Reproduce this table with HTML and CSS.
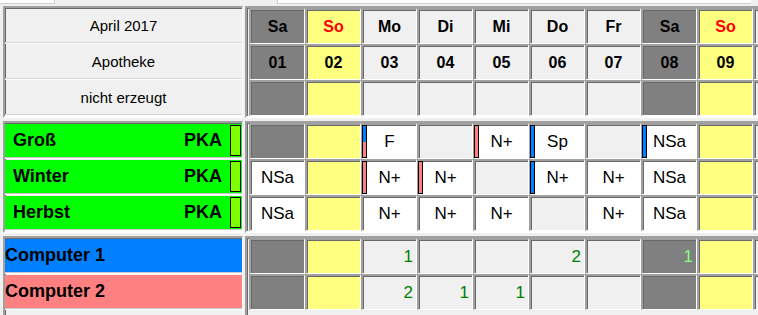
FILE: index.html
```html
<!DOCTYPE html>
<html lang="de">
<head>
<meta charset="utf-8">
<title>Dienstplan April 2017</title>
<link rel="stylesheet" href="styles.css">
</head>
<body>
<div class="topbar"><div class="tb tb1"></div><div class="tb tb2"></div></div>

<section class="band">
  <div class="side">
    <div class="srow">April 2017</div>
    <div class="srow">Apotheke</div>
    <div class="srow">nicht erzeugt</div>
  </div>
  <div class="grid">
    <div class="c we hd">Sa</div><div class="c so hd red">So</div><div class="c lt hd">Mo</div><div class="c lt hd">Di</div><div class="c lt hd">Mi</div><div class="c lt hd">Do</div><div class="c lt hd">Fr</div><div class="c we hd">Sa</div><div class="c so hd red">So</div><div class="c lt"></div>
    <div class="c we hd">01</div><div class="c so hd">02</div><div class="c lt hd">03</div><div class="c lt hd">04</div><div class="c lt hd">05</div><div class="c lt hd">06</div><div class="c lt hd">07</div><div class="c we hd">08</div><div class="c so hd">09</div><div class="c lt"></div>
    <div class="c we"></div><div class="c so"></div><div class="c lt"></div><div class="c lt"></div><div class="c lt"></div><div class="c lt"></div><div class="c lt"></div><div class="c we"></div><div class="c so"></div><div class="c lt"></div>
  </div>
</section>

<section class="band">
  <div class="side">
    <div class="srow"><div class="emp"><span class="ename">Groß</span><span class="equal">PKA</span><span class="tag"></span></div></div>
    <div class="srow"><div class="emp"><span class="ename">Winter</span><span class="equal">PKA</span><span class="tag"></span></div></div>
    <div class="srow"><div class="emp"><span class="ename">Herbst</span><span class="equal">PKA</span><span class="tag"></span></div></div>
  </div>
  <div class="grid">
    <div class="c we"></div><div class="c so"></div><div class="c wh sh"><span class="bar split"></span>F</div><div class="c lt"></div><div class="c wh sh"><span class="bar pink"></span>N+</div><div class="c wh sh"><span class="bar blue"></span>Sp</div><div class="c lt"></div><div class="c wh sh"><span class="bar blue"></span>NSa</div><div class="c so"></div><div class="c lt"></div>
    <div class="c wh sh">NSa</div><div class="c so"></div><div class="c wh sh"><span class="bar pink"></span>N+</div><div class="c wh sh"><span class="bar pink"></span>N+</div><div class="c lt"></div><div class="c wh sh"><span class="bar blue"></span>N+</div><div class="c wh sh">N+</div><div class="c wh sh">NSa</div><div class="c so"></div><div class="c lt"></div>
    <div class="c wh sh">NSa</div><div class="c so"></div><div class="c wh sh">N+</div><div class="c wh sh">N+</div><div class="c wh sh">N+</div><div class="c lt"></div><div class="c wh sh">N+</div><div class="c wh sh">NSa</div><div class="c so"></div><div class="c lt"></div>
  </div>
</section>

<section class="band last">
  <div class="side">
    <div class="srow"><div class="pc pc1">Computer 1</div></div>
    <div class="srow"><div class="pc pc2">Computer 2</div></div>
  </div>
  <div class="grid">
    <div class="c we"></div><div class="c so"></div><div class="c lt num">1</div><div class="c lt"></div><div class="c lt"></div><div class="c lt num">2</div><div class="c lt"></div><div class="c we num faint">1</div><div class="c so"></div><div class="c lt"></div>
    <div class="c we"></div><div class="c so"></div><div class="c lt num">2</div><div class="c lt num">1</div><div class="c lt num">1</div><div class="c lt"></div><div class="c lt"></div><div class="c we"></div><div class="c so"></div><div class="c lt"></div>
  </div>
</section>
</body>
</html>
```

FILE: styles.css
```css
* { box-sizing: border-box; }

html, body {
  margin: 0;
  padding: 0;
  background: #f0f0f0;
  overflow: hidden;
  font-family: "Liberation Sans", Arial, sans-serif;
  color: #000;
}

body {
  width: 758px;
  height: 315px;
}

.topbar {
  display: flex;
  height: 4px;
  margin-bottom: 2px;
}

.tb {
  height: 4px;
  background: #fff;
  border-bottom: 1px solid #d0d0d0;
}

.tb1 {
  width: 55px;
  border-right: 1px solid #d0d0d0;
}

.tb2 {
  margin-left: 222px;
  width: 474px;
  border-left: 1px solid #d0d0d0;
}

.band {
  display: flex;
  margin-bottom: 3px;
}

.side {
  margin-left: 3px;
  width: 240px;
  flex: none;
  border-top: 2px solid #a0a0a0;
  border-left: 2px solid #a0a0a0;
  border-right: 1px solid #fff;
  border-bottom: 2px solid #fff;
  box-shadow: inset 1px 1px 0 #696969;
}

.srow {
  height: 36px;
  border-bottom: 1px solid #fff;
  box-shadow: inset 0 -1px 0 #d4d4d4;
  display: flex;
  align-items: center;
  justify-content: center;
  font-size: 15px;
}

.band .srow:has(.emp),
.band .srow:has(.pc) {
  display: block;
  padding-top: 1px;
  box-shadow: inset 0 -1px 0 #c8c8c8;
}

.emp {
  height: 33px;
  background: #00ff00;
  display: flex;
  align-items: center;
  padding-left: 8px;
  font-weight: bold;
  font-size: 18px;
}

.ename { flex: 1; }

.equal { margin-right: 8px; }

.tag {
  width: 11px;
  height: 31px;
  margin-right: 1px;
  border: 1px solid #000;
  background: #80ff00;
}

.pc {
  height: 33px;
  display: flex;
  align-items: center;
  font-weight: bold;
  font-size: 18px;
}

.pc1 { background: #0080ff; }
.pc2 { background: #ff8080; }

.grid {
  margin-left: 2px;
  width: 513px;
  flex: none;
  overflow: hidden;
  display: grid;
  grid-template-columns: repeat(10, 56px);
  grid-auto-rows: 36px;
  align-content: start;
  padding-left: 2px;
  border-top: 2px solid #a0a0a0;
  border-left: 2px solid #a0a0a0;
  border-bottom: 2px solid #fff;
  box-shadow: inset 1px 1px 0 #696969;
}

.band.last {
  margin-bottom: 0;
}

.band.last .side,
.band.last .grid {
  height: 79px;
  border-bottom: 0;
}

.c {
  position: relative;
  border-style: solid;
  border-width: 2px 1px 1px 2px;
  border-color: #a0a0a0 #fff #fff #a0a0a0;
  box-shadow: inset 1px 1px 0 #696969;
  display: flex;
  align-items: center;
  justify-content: center;
}

.we { background: #808080; }
.so { background: #ffff80; }
.lt { background: #f0f0f0; }
.wh { background: #fff; }

.hd {
  font-weight: bold;
  font-size: 16px;
}

.red { color: #ff0000; }

.sh {
  font-size: 17px;
}

.num {
  justify-content: flex-end;
  padding-right: 3px;
  font-size: 17px;
  color: #008000;
}

.num.faint { color: #80ff80; }

.bar {
  position: absolute;
  left: -1px;
  top: 0;
  bottom: 0;
  width: 5px;
  border: 1px solid #000;
}

.bar.blue { background: #0080ff; }
.bar.pink { background: #ff8080; }
.bar.split { background: linear-gradient(#0080ff 0 50%, #ff8080 50% 100%); }
```
